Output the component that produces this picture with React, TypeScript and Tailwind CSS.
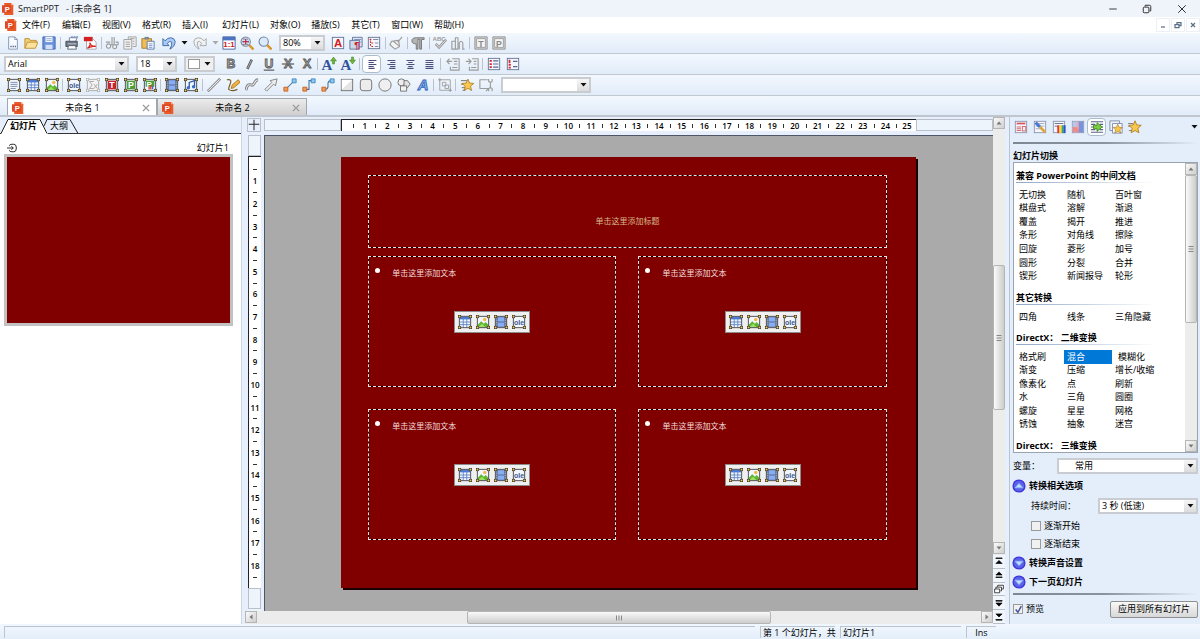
import type { ReactNode } from "react"
import clsx from "clsx"

type Kids = { children?: ReactNode }

const Svg = ({ children, className = "size-[14px]" }: Kids & { className?: string }) => (
	<svg viewBox="0 0 16 16" className={clsx("shrink-0", className)} fill="none" aria-hidden="true">{children}</svg>
)

const Letter = ({ children, fill, size = 10, x = 8, y = 12 }: { children: string, fill: string, size?: number, x?: number, y?: number }) => (
	<text x={x} y={y} fontSize={size} fontWeight="bold" fontFamily="Liberation Sans, sans-serif" textAnchor="middle" fill={fill}>{children}</text>
)

const Logo = () => (
	<Svg className="size-3">
		<path d="M3 0h9l3 3v13H3z" fill="#e95a2b" />
		<path d="M0 3h12v10H0z" fill="#e04a22" />
		<path d="M12 0v3h3z" fill="#f6a98c" />
		<Letter fill="#fff" size={10} x={7} y={12}>P</Letter>
	</Svg>
)

// selection frame with four yellow handles
const Frame = ({ children, className, gray }: Kids & { className?: string, gray?: boolean }) => (
	<Svg className={className}>
		<rect x="2" y="2" width="12" height="12" fill={gray ? "#f2f2f2" : "#f1f5fc"} />
		{children}
		<rect x="1.5" y="1.5" width="13" height="13" stroke={gray ? "#a5a5a5" : "#3c3f48"} />
		{[[0, 0], [12.5, 0], [0, 12.5], [12.5, 12.5]].map(([x, y]) => (
			<g key={`${x}-${y}`}>
				<rect x={x} y={y} width="3.5" height="3.5" fill={gray ? "#a8a8a8" : "#33302a"} />
				<rect x={x + 0.7} y={y + 0.7} width="2.1" height="2.1" fill={gray ? "#f4f4f4" : "#f0c858"} />
			</g>
		))}
	</Svg>
)

const TextFrame = () => <Frame><path d="M4 5h8M4 7.300h8M4 9.600h8M4 12h6" stroke="#7286a8" /></Frame>
const TableFrame = ({ className }: { className?: string }) => (
	<Frame className={className}>
		<path d="M2 2h12v3H2z" fill="#4a7ad2" />
		<path d="M2 8h12M2 11h12M6 4v10M10 4v10" stroke="#5c83c8" />
	</Frame>
)
const ImageFrame = ({ className }: { className?: string }) => (
	<Frame className={className}>
		<path d="M2 14V11l4-4 3 3 2-2 3 3v3z" fill="#5fb52f" />
		<path d="M2 14l5-4 4 4z" fill="#9be064" />
		<circle cx="10" cy="5" r="2" fill="#f5b84a" />
	</Frame>
)
const OleFrame = ({ className }: { className?: string }) => (
	<Frame className={className}><Letter fill="#3d5a8e" size={8} y={11}>ole</Letter></Frame>
)
const FilmFrame = ({ className }: { className?: string }) => (
	<Frame className={className}>
		<path d="M2 2h12v12H2z" fill="#5a6b8c" />
		<path d="M4.500 2.500h7v5h-7zM4.500 8.500h7v5h-7z" fill="#86adf5" />
		<path d="M3.200 4v9M12.800 4v9" stroke="#d6e0f4" strokeDasharray="1 1" />
	</Frame>
)
const LetterFrame = ({ letter, bg }: { letter: string, bg: string }) => (
	<Frame><path d="M3 3h10v10H3z" fill={bg} /><Letter fill="#fff" size={10} y={11.5}>{letter}</Letter></Frame>
)

const ABig = ({ up }: { up?: boolean }) => (
	<Svg className="size-4">
		<text x="6" y="14" fontSize="15" fontWeight="bold" fontFamily="Liberation Serif, serif" textAnchor="middle" fill="#31549d">A</text>
		<path d={up ? "M12.500 1l3 4h-2v3h-2V5h-2z" : "M12.500 8l3-4h-2V1h-2v3h-2z"} fill="#6db33a" stroke="#3f7d1c" strokeWidth=".5" />
	</Svg>
)

const Lines = ({ d }: { d: string }) => <Svg><path d={d} stroke="#4b4f7c" strokeWidth="1.3" /></Svg>

const Boxed = ({ children, stroke = "#5f6f92" }: Kids & { stroke?: string }) => (
	<Svg><rect x="1.5" y="1.5" width="13" height="13" fill="#f4f6fc" stroke={stroke} />{children}</Svg>
)

const Magnifier = ({ children }: Kids) => (
	<Svg>
		<path d="M10.500 10.500l4 4" stroke="#d99a2b" strokeWidth="3" strokeLinecap="round" />
		<circle cx="6.500" cy="6.500" r="5.300" fill="#dbe9fa" stroke="#72839f" strokeWidth="1.200" />
		{children}
	</Svg>
)

const Gray = ({ d, fill = "none", width = 1.3 }: { d: string, fill?: string, width?: number }) => (
	<Svg><path d={d} stroke="#9c9c9c" strokeWidth={width} fill={fill} strokeLinejoin="round" /></Svg>
)

const Connector = ({ d }: { d: string }) => (
	<Svg>
		<path d={d} stroke="#3f6fa5" strokeWidth="1.2" />
		<path d="M10.500 1h4.500v4.500h-4.500z" fill="#8cc8f0" stroke="#3d86bb" />
		<path d="M1 10.500h4.500V15H1z" fill="#f29a56" stroke="#c4601f" />
	</Svg>
)

const Star = ({ x = 8, y = 8, s = 1 }: { x?: number, y?: number, s?: number }) => (
	<path
		transform={`translate(${x} ${y}) scale(${s})`}
		d="M0-7.500L2.100-2.500 7.500-2 3.400 1.600 4.700 7 0 4.200-4.700 7-3.400 1.600-7.500-2-2.100-2.500z"
		fill="#f8c84e"
		stroke="#a87818"
	/>
)

const Btn = ({ label, children, active, className = "w-[18px]" }: Kids & { label: string, active?: boolean, className?: string }) => (
	<button
		type="button"
		aria-label={label}
		className={clsx("flex h-[18px] shrink-0 items-center justify-center", className, active && "rounded-sm border border-[#a9bccf] bg-white")}
	>
		{children}
	</button>
)

const Wide = (props: Kids & { label: string, active?: boolean }) => <Btn {...props} className="w-[19px]" />

const Sep = ({ className = "w-1" }: { className?: string }) => (
	<div className={clsx("flex h-3 shrink-0 justify-center", className)}><div className="w-px bg-[#bcc2ca]" /></div>
)

const Caret = ({ className = "w-[7px]", gray }: { className?: string, gray?: boolean }) => (
	<svg viewBox="0 0 7 4" className={clsx("h-1", className)} aria-hidden="true"><path d="M.5 0h6L3.500 3.500z" fill={gray ? "#a8a8a8" : "#111"} /></svg>
)

const Combo = ({ label, value, className, id, pad = "pl-0.5" }: { label: string, value: string, className: string, id?: string, pad?: string }) => (
	<div className={clsx("relative h-4 border-2 border-[#c9ccd1] bg-white", className)}>
		<select id={id} aria-label={id ? undefined : label} className={clsx("block h-3 w-full appearance-none bg-transparent pr-3 leading-3 outline-none", pad)}>
			<option>{value}</option>
		</select>
		<span className="pointer-events-none absolute inset-y-0 right-0 flex w-3 items-center justify-center bg-linear-to-b from-[#f6f6f6] to-[#dcdcdc]">
			<Caret />
		</span>
	</div>
)

const Toolbar = ({ children }: Kids) => (
	<div className="flex h-[21px] shrink-0 items-center border-b border-[#c2c8d0] bg-linear-to-b from-[#f3f8fe] to-[#e1ecf9] pl-1">{children}</div>
)

const TitleBar = () => (
	<header className="flex h-[17px] shrink-0 items-center bg-[#eff3fa] pl-0.5">
		<Logo />
		<h1 className="ml-1 whitespace-pre text-[#222]">SmartPPT   - [未命名 1]</h1>
		<div className="ml-auto flex">
			<button type="button" aria-label="最小化" className="flex h-4 w-[34px] items-center justify-center"><Svg className="size-2.5"><path d="M2 8h12" stroke="#333" strokeWidth="1.5" /></Svg></button>
			<button type="button" aria-label="还原" className="flex h-4 w-[34px] items-center justify-center">
				<Svg className="size-2.5"><path d="M5 4V2h7q2 0 2 2v7h-2" stroke="#333" strokeWidth="1.6" /><rect x="2" y="5" width="9" height="9" rx="1.500" stroke="#333" strokeWidth="1.600" /></Svg>
			</button>
			<button type="button" aria-label="关闭" className="flex h-4 w-[36px] items-center justify-center"><Svg className="size-2.5"><path d="M2 2l12 12M14 2L2 14" stroke="#333" strokeWidth="1.6" /></Svg></button>
		</div>
	</header>
)

const menus = ["文件(F)", "编辑(E)", "视图(V)", "格式(R)", "插入(I)", "幻灯片(L)", "对象(O)", "播放(S)", "其它(T)", "窗口(W)", "帮助(H)"]

const MenuBar = () => (
	<nav className="flex h-4 shrink-0 items-center bg-white pl-[5px]">
		<Logo />
		<div className="ml-[5px] flex gap-[11px]">
			{menus.map(m => <button key={m} type="button" className="min-w-[29px] whitespace-nowrap text-left">{m}</button>)}
		</div>
		<div className="ml-auto flex gap-px text-[#5c6f88]">
			{[["最小化", "M4 12h8"], ["还原", "M2 7h8v6H2zM6 6V3h8v6h-3"], ["关闭", "M4 4l8 8M12 4l-8 8"]].map(([label, d]) => (
				<button key={label} type="button" aria-label={label} className="flex size-[14px] items-center justify-center border border-[#edf0f4]">
					<Svg className="size-2"><path d={d} stroke="currentColor" strokeWidth="2.5" /></Svg>
				</button>
			))}
		</div>
	</nav>
)

const StandardBar = () => (
	<Toolbar>
		<Btn label="新建"><Svg><path d="M3 1h7l3 3v11H3z" fill="#f7faff" stroke="#7f90ae" /><path d="M10 1v3h3" stroke="#7f90ae" /><path d="M5 12h7" stroke="#55658a" strokeWidth="1.500" strokeDasharray="1.500 1" /></Svg></Btn>
		<Btn label="打开"><Svg><path d="M1 14V3h5l1 2h7v3" fill="#f4d074" stroke="#b98a2e" /><path d="M1 14l3-7h12l-3 7z" fill="#fce29a" stroke="#b98a2e" /></Svg></Btn>
		<Btn label="保存"><Svg><path d="M1 1h14v14H1z" fill="#6a92dc" stroke="#3f64ae" /><path d="M4 1h8v6H4z" fill="#f3f7ff" /><path d="M5 3h6M5 5h6" stroke="#95a9cf" /><path d="M4 10h8v5H4z" fill="#d3e0f7" /></Svg></Btn>
		<Sep className="w-[5px]" />
		<Btn label="打印"><Svg><path d="M5 6V2h9l-2 4" fill="#fff" stroke="#6b7a92" /><path d="M1 6h13v6H1z" fill="#6d7684" stroke="#454c58" /><path d="M3 9h10" stroke="#cbd3df" /><path d="M4 11h8l1 4H3z" fill="#fff" stroke="#555d6a" /><path d="M7 1h8" stroke="#3e62b0" strokeDasharray="2 1" /></Svg></Btn>
		<Btn label="导出PDF"><Svg><path d="M4 3h7l4 4v8H4z" fill="#fff" stroke="#a4a4a4" /><path d="M1 1h10v5H1z" fill="#d42020" /><path d="M5 14c3-2 4-6 3-6s1 4 6 4c1-1-5 0-9 2z" stroke="#d42020" strokeWidth="1.300" /></Svg></Btn>
		<Sep />
		<Btn label="剪切"><Gray d="M8 1v9M10.500 1v9M1 7h5M12 7h3v3H5.500M4 9a2.500 2.500 0 1 0 .1 0M11 10a2.300 2.300 0 1 0 .1 0" /></Btn>
		<Btn label="复制"><Gray d="M6 4V1h9v11h-4M1 4h9v11H1zM3 7h5M3 9.500h5M3 12h5M8 3h5M11 6h2M11 9h2" fill="#f0f0f0" width={1} /></Btn>
		<Btn label="粘贴"><Svg><path d="M1 3h11v11H1z" fill="#efbd56" stroke="#a87a20" /><path d="M4 1h5v3H4z" fill="#7c8798" /><path d="M7 6h8v9H7z" fill="#f4f8ff" stroke="#5571a7" /><path d="M9 9h4M9 11h4M9 13h4" stroke="#7693c5" /></Svg></Btn>
		<Btn label="撤消" className="w-6"><Svg><path d="M1 3v8h7L6 8.500q3-4 5-1.500 1 3-2 8 6-3 6-9-1-4-5-4-4 0-6.500 3.500z" fill="#a9caf4" stroke="#355f9f" strokeLinejoin="round" /></Svg></Btn>
		<Caret />
		<Btn label="重做" className="w-6"><Svg><path d="M15 3v8H8l2-2.500Q7 4.500 5 7q-1 3 2 8-6-3-6-9 1-4 5-4 4 0 6.500 3.500z" fill="#f2f2f2" stroke="#a2a2a2" strokeLinejoin="round" /></Svg></Btn>
		<Caret gray />
		<div className="flex pl-px">
			<Btn label="实际大小"><Svg><path d="M1 1h14v14H1z" fill="#fff" stroke="#3d5a9a" /><path d="M1 1h14v4H1z" fill="#4b73bf" /><Letter fill="#d01818" size={9} y={13}>1:1</Letter></Svg></Btn>
			<Btn label="缩放选区"><Magnifier><path d="M6.500 3v7M3 6.500h7" stroke="#c02f45" strokeWidth="1.500" /><path d="M3.500 3.500h6v6h-6z" stroke="#54607a" strokeDasharray="2 2" /></Magnifier></Btn>
			<Btn label="缩放"><Magnifier /></Btn>
		</div>
		<Combo label="显示比例" value="80%" className="ml-[5px] mr-1 w-[46px]" />
		<Btn label="字符"><Boxed><Letter fill="#d21c1c" size={13} y={12.5}>A</Letter></Boxed></Btn>
		<Btn label="段落"><Svg><path d="M4 1.500h11v11H4z" fill="#dde5f5" stroke="#5d6f96" /><path d="M6 4h8M6 7h8" stroke="#7b8bb0" /><path d="M1 5h11v10H1z" fill="#cdd7ec" stroke="#5d6f96" /><Letter fill="#d21c1c" size={11} x={9} y={14}>¶</Letter></Svg></Btn>
		<Btn label="大纲"><Boxed><path d="M7 4h6M9 8h4M9 12h4" stroke="#6b7ca5" /><path d="M3 4h3M5 8h3M5 12h3M4 3v9" stroke="#d22a2a" strokeWidth="1.300" strokeDasharray="2 1" /></Boxed></Btn>
		<Sep />
		<Btn label="格式刷"><Gray d="M15 1l-5 6M3 6l8-1 1 7-5 3-6-5zM5 6l6 5" fill="#f3f3f3" /></Btn>
		<Sep />
		<Btn label="段落标记"><Svg><path d="M15 2H6Q1 2 1 5.500T6 9v6h2V4h2v11h2V4h3z" fill="#b5b5b5" stroke="#6f6f6f" /></Svg></Btn>
		<Sep />
		<Btn label="拼写检查"><Svg><Letter fill="#999" size={7} x={7} y={6}>ABC</Letter><path d="M3 9l4 4 8-9" stroke="#979797" strokeWidth="3" /><path d="M3 9l4 4 8-9" stroke="#e9e9e9" /></Svg></Btn>
		<Btn label="同义词"><Gray d="M1 6h4v9H1zM5 2h3v13H5zM9.500 15V8q2-4 4 0v7h2" /></Btn>
		<Sep className="w-[5px]" />
		<Btn label="标题母版"><Svg><path d="M1 1h14v14H1z" fill="#d4d4d4" stroke="#8b8b8b" /><path d="M3 3h10v10H3z" fill="#f5f5f5" stroke="#9a9a9a" /><Letter fill="#888">T</Letter></Svg></Btn>
		<Btn label="幻灯片母版"><Svg><path d="M1 1h14v14H1z" fill="#d4d4d4" stroke="#8b8b8b" /><path d="M3 3h10v10H3z" fill="#f5f5f5" stroke="#9a9a9a" /><Letter fill="#888">P</Letter></Svg></Btn>
	</Toolbar>
)

const GrayLetter = ({ children, line }: { children: string, line?: string }) => (
	<Svg>
		<text x="8" y="13" fontSize="14" fontWeight="bold" fontFamily="Liberation Sans, sans-serif" textAnchor="middle" fill="#b0b0b0" stroke="#5d5d5d">{children}</text>
		{line && <path d={line} stroke="#666" strokeWidth="1.500" />}
	</Svg>
)

const FormatBar = () => (
	<Toolbar>
		<Combo label="字体" value="Arial" className="w-[125px]" />
		<Combo label="字号" value="18" className="ml-[7px] w-[41px]" />
		<div className="ml-[7px] mr-[6px] flex h-4 w-[31px] items-center border-2 border-[#c9ccd1] bg-[#efefef]">
			<button type="button" aria-label="填充颜色" className="flex w-full items-center justify-between px-0.5"><span className="h-2.5 w-3 border border-[#9a9a9a] bg-white" /><Caret /></button>
		</div>
		<Wide label="粗体"><GrayLetter>B</GrayLetter></Wide>
		<Wide label="斜体"><Svg><path d="M10 3L5 13.500" stroke="#5d5d5d" strokeWidth="3" /><path d="M9.700 3.700L5.300 12.800" stroke="#b8b8b8" /></Svg></Wide>
		<Wide label="下划线"><GrayLetter line="M2 15h12">U</GrayLetter></Wide>
		<Wide label="删除线"><GrayLetter line="M1 8h14">X</GrayLetter></Wide>
		<Wide label="阴影"><GrayLetter>X</GrayLetter></Wide>
		<Sep className="w-[3px]" />
		<Wide label="增大字号"><ABig up /></Wide>
		<Wide label="减小字号"><ABig /></Wide>
		<Sep className="w-[5px]" />
		<Wide label="左对齐" active><Lines d="M4 4h9M4 6.300h6M4 8.600h9M4 10.900h6M4 13h7" /></Wide>
		<Wide label="右对齐"><Lines d="M4 4h9M7 6.300h6M4 8.600h9M7 10.900h6M6 13h7" /></Wide>
		<Wide label="居中"><Lines d="M4 4h9M6 6.300h5M4 8.600h9M6 10.900h5M5 13h7" /></Wide>
		<Wide label="两端对齐"><Lines d="M4 4h9M4 6.300h9M4 8.600h9M4 10.900h9M4 13h9" /></Wide>
		<Sep className="w-[5px]" />
		<Wide label="减少缩进"><Gray d="M7 2h8v13H5v-4M9 5h4M9 8h4M7 12h6M1 5h6M4 2L1 5l3 3" /></Wide>
		<Wide label="增加缩进"><Gray d="M8 2h7v13H5v-4M10 5h3M10 8h3M7 12h6M1 5h6M4 2l3 3-3 3" /></Wide>
		<Sep className="w-[3px]" />
		<Wide label="项目符号"><Boxed><path d="M3 4.500h2.500M3 8h2.500M3 11.500h2.500" stroke="#d22a2a" strokeWidth="2" /><path d="M7 4.500h6M7 8h6M7 11.500h6" stroke="#59689a" strokeWidth="1.300" /></Boxed></Wide>
		<Wide label="编号"><Boxed><path d="M4 3v4M3 9h2.500M3 12h2.500" stroke="#d22a2a" strokeWidth="2" /><path d="M8 5h5M8 11h5" stroke="#59689a" strokeWidth="1.300" /></Boxed></Wide>
	</Toolbar>
)

const ObjectBar = () => (
	<Toolbar>
		<Wide label="文本框"><TextFrame /></Wide>
		<Wide label="表格"><TableFrame /></Wide>
		<Wide label="图片"><ImageFrame /></Wide>
		<Sep className="w-[3px]" />
		<Wide label="OLE 对象"><OleFrame /></Wide>
		<Wide label="公式"><Frame gray><path d="M9 4H4l3 4-3 4h5M9 7l4 5M13 7l-4 5" stroke="#a2a2a2" /></Frame></Wide>
		<Wide label="TextMaker 对象"><LetterFrame letter="T" bg="#c1272d" /></Wide>
		<Wide label="PlanMaker 对象"><LetterFrame letter="P" bg="#4f9d3a" /></Wide>
		<Wide label="图表"><Frame><path d="M3 3h10v7H3z" fill="#4f9d3a" /><Letter fill="#fff" size={9} x={7} y={10}>P</Letter><path d="M7 13v-3M9 13V8" stroke="#d3362e" strokeWidth="1.500" /><path d="M11 13V9" stroke="#4068c8" strokeWidth="1.500" /></Frame></Wide>
		<Sep className="w-[3px]" />
		<Wide label="影片"><FilmFrame /></Wide>
		<Wide label="声音"><Frame><path d="M6 11V5l6-2v7" stroke="#2c5cab" strokeWidth="1.500" /><circle cx="5" cy="11" r="2" fill="#3a6fc4" /><circle cx="11" cy="10" r="2" fill="#3a6fc4" /></Frame></Wide>
		<Sep className="w-[4px]" />
		<Wide label="直线"><Svg><path d="M1 15L15 1" stroke="#747474" strokeWidth="3" /><path d="M1.500 14.500l13-13" stroke="#f1f1f1" strokeWidth="1.200" /></Svg></Wide>
		<Wide label="自由曲线"><Svg><path d="M1 2q6-1 4 4T3 13q4 3 10 0" stroke="#7a5a22" strokeWidth="1.300" /><path d="M6 12l1-4 7-6 2 3-7 6z" fill="#f1b544" stroke="#a97519" /></Svg></Wide>
		<Wide label="曲线"><Svg><path d="M1 14C3 4 7 9 9 8s2-6 6-6" stroke="#777" strokeWidth="3.200" /><path d="M1 14C3 4 7 9 9 8s2-6 6-6" stroke="#efefef" strokeWidth="1.200" /></Svg></Wide>
		<Wide label="箭头"><Svg><path d="M1 13l8-8-2-2 8-2-2 8-2-2-8 8z" fill="#eee" stroke="#7a7a7a" /></Svg></Wide>
		<Wide label="直线连接符"><Connector d="M4 12l8-8" /></Wide>
		<Wide label="折线连接符"><Connector d="M4 13h4V3h4" /></Wide>
		<Wide label="曲线连接符"><Connector d="M5 13C12 12 4 4 11 3" /></Wide>
		<Wide label="矩形"><Svg><rect x="1.500" y="1.500" width="13" height="13" fill="#e4e4e4" stroke="#6c6c6c" /><path d="M2 2h12L2 13z" fill="#fff" /></Svg></Wide>
		<Wide label="圆角矩形"><Svg><rect x="1.500" y="1.500" width="13" height="13" rx="3" fill="#ececec" stroke="#6c6c6c" /></Svg></Wide>
		<Wide label="椭圆"><Svg><circle cx="8" cy="8" r="7" fill="#efefef" stroke="#6c6c6c" /></Svg></Wide>
		<Wide label="自选图形"><Svg><circle cx="5" cy="5" r="4" fill="#eee" stroke="#6c6c6c" /><path d="M8 3h4l3 4-3 4H8z" fill="#e2e2e2" stroke="#6c6c6c" /><path d="M4 9h7v6H4z" fill="#f2f2f2" stroke="#6c6c6c" /></Svg></Wide>
		<Wide label="艺术字"><Svg><text x="8" y="14" fontSize="17" fontStyle="italic" fontWeight="bold" fontFamily="Liberation Sans, sans-serif" textAnchor="middle" fill="#8fbcf2" stroke="#2f62b5">A</text></Svg></Wide>
		<Sep className="w-[3px]" />
		<Wide label="组合"><Gray d="M2 2h12v12H2zM5 5h4v4H5zM8 8h4v4H8zM0 2h4M2 0v4M12 14h4M14 12v4" width={1} /></Wide>
		<Sep className="w-[3px]" />
		<Wide label="动画"><Svg><path d="M1 3h7M1 7h4M2 11h4M3 14h3" stroke="#666" /><Star x={9} s={0.9} /></Svg></Wide>
		<Wide label="动作按钮"><Gray d="M11 12H1V2h9M8 15l3-3M11 1v3l2 1 2-1V1M13 5v6M11 15v-3l2-1 2 1v3" /></Wide>
		<Combo label="对象" value="" className="ml-[6px] w-[90px]" />
	</Toolbar>
)

const DocTab = ({ name, active }: { name: string, active?: boolean }) => (
	<div className={clsx("flex h-[17px] w-[150px] items-center border border-b-0 border-[#a0a7b0] pl-1 pr-[5px] pt-px", active ? "bg-white" : "bg-linear-to-b from-[#ececec] to-[#cfcfcf]")}>
		<Logo />
		<button type="button" role="tab" aria-selected={!!active} className="flex-1 text-center">{name}</button>
		<button type="button" aria-label="关闭"><Svg className="size-2.5"><path d="M3 3l10 10M13 3L3 13" stroke="#9a9a9a" strokeWidth="2.200" /></Svg></button>
	</div>
)

const LeftPanel = () => (
	<aside className="flex w-[242px] shrink-0 flex-col border-r border-[#cdd5df] bg-white">
		<div className="relative flex h-[17px] shrink-0 items-center border-b border-[#333] bg-[#e6effb] pt-0.5" role="tablist">
			<svg viewBox="0 0 80 17" className="absolute left-0 top-0 h-[17px] w-20" fill="none" aria-hidden="true">
				<path d="M1 17L8 2h32l8 15" fill="#fff" />
				<path d="M1 16.500L8 2.500h32l7 14M44 9l3-6.500h23l8 14" stroke="#222" />
			</svg>
			<button type="button" role="tab" aria-selected="true" className="relative ml-[10px] font-bold">幻灯片</button>
			<button type="button" role="tab" aria-selected="false" className="relative ml-[13px]">大纲</button>
		</div>
		<div className="flex items-center justify-between pl-[7px] pr-3 pt-2 leading-3">
			<Svg className="size-2.5"><path d="M4 5V4q0-2 4-2h3q4 0 4 6t-4 6H8q-4 0-4-2v-1M0 8h10M7 5l3 3-3 3" stroke="#222" strokeWidth="1.500" /></Svg>
			<span>幻灯片1</span>
		</div>
		<button type="button" aria-label="幻灯片 1 缩略图" className="ml-1 mr-2 aspect-[4/3] border-[3px] border-[#c2c2c2] bg-[#800000]" />
	</aside>
)

const ArrowGlyph = ({ d }: { d: string }) => <Svg className="size-2.5"><path d={d} fill="currentColor" stroke="currentColor" /></Svg>

const ScrollBtn = ({ label, d }: { label: string, d: string }) => (
	<button type="button" aria-label={label} className="flex size-3 shrink-0 items-center justify-center border border-[#b5b5b5] bg-linear-to-br from-[#fafafa] to-[#cfcfcf] text-[#777]">
		<Svg className="size-2"><path d={d} fill="currentColor" /></Svg>
	</button>
)

const UP = "M8 5l5 6H3z"
const DOWN = "M8 11l5-6H3z"

const HRuler = () => (
	<div className="flex h-3 bg-[#eef4fc]">
		<div className="w-[10.5%] border border-[#b9c0c9]" />
		<div className="flex w-[79%] overflow-hidden border-l border-t border-[#222] bg-white text-[8px] font-semibold leading-none">
			<div className="flex-[5]" />
			{Array.from({ length: 25 }, (_, i) => (
				<div key={i} className={clsx("flex min-w-0 items-center", i === 24 ? "flex-[9]" : "flex-[10]")}>
					<span className="h-1 w-px bg-[#333]" />
					<span className="flex-1 text-center">{i + 1}</span>
				</div>
			))}
		</div>
		<div className="flex-1 border border-[#b9c0c9]" />
	</div>
)

const VRuler = () => (
	<div className="flex w-[13px] flex-col bg-[#eef4fc] pb-0.5">
		<div className="flex-1 border border-[#b9c0c9]" />
		<div className="flex h-[432px] flex-col border-l border-t border-[#222] bg-white text-[8px] font-semibold leading-none">
			<div className="flex-[11]" />
			{Array.from({ length: 18 }, (_, i) => (
				<div key={i} className="flex min-h-0 flex-[20] flex-col items-center">
					<span className="h-px w-1 bg-[#333]" />
					<span className="flex flex-1 items-center">{i + 1}</span>
				</div>
			))}
			<div className="flex flex-[10] justify-center"><span className="h-px w-1 bg-[#333]" /></div>
		</div>
		<div className="flex-1 border border-[#b9c0c9]" />
	</div>
)

const Placeholder = ({ children, className }: Kids & { className?: string }) => (
	<div className={clsx("flex bg-black", className)}>
		<div className="flex flex-1 flex-col border border-dashed border-[#f0e0e0] bg-[#800000] bg-clip-padding">{children}</div>
	</div>
)

const ContentBox = () => (
	<Placeholder>
		<div className="flex gap-3 pl-1.5 pt-[10px]">
			<span className="mt-px size-[5px] rounded-full bg-white" />
			<span className="text-[8px] leading-3 text-[#f0dede]">单击这里添加文本</span>
		</div>
		<div className="mx-auto mt-8 flex h-[22px] w-[76px] items-center justify-around border border-[#8c8c8c] bg-[#f0f0f0] px-px">
			<button type="button" aria-label="插入表格"><TableFrame /></button>
			<button type="button" aria-label="插入图片"><ImageFrame /></button>
			<button type="button" aria-label="插入影片"><FilmFrame /></button>
			<button type="button" aria-label="插入 OLE 对象"><OleFrame /></button>
		</div>
	</Placeholder>
)

const Editor = () => (
	<main className="ml-[3px] flex min-w-0 flex-1 flex-col">
		<div className="flex h-[18px] shrink-0 items-center gap-[3px] pb-0.5 pl-0.5">
			<button type="button" aria-label="标尺原点" className="size-[14px] border border-[#b9c0c9]"><Svg className="size-3"><path d="M8 1v14M1 7h14" stroke="#222" strokeWidth="1.300" /></Svg></button>
			<div className="min-w-0 flex-1"><HRuler /></div>
		</div>
		<div className="flex min-h-0 flex-1">
			<div className="flex w-[19px] shrink-0 justify-center"><VRuler /></div>
			<div className="flex min-w-0 flex-1 items-center justify-center border-l border-t border-[#4d5767] bg-[#aaaaaa] pb-0.5 pr-px">
				<div className="flex aspect-[4/3] w-[79%] flex-col gap-2 bg-[#800000] pb-12 pl-[27px] pr-[29px] pt-[18px] shadow-[2px_2px_0_#1a0000]">
					<Placeholder className="h-[73px] text-center">
						<span className="my-auto pt-[18px] text-[8px] leading-3 text-[#d8b98a]">单击这里添加标题</span>
					</Placeholder>
					<div className="grid flex-1 grid-cols-2 grid-rows-2 gap-[22px]">
						<ContentBox />
						<ContentBox />
						<ContentBox />
						<ContentBox />
					</div>
				</div>
			</div>
		</div>
		<div className="flex h-[13px] shrink-0 bg-[#ececec]">
			<ScrollBtn label="向左滚动" d="M5 8l6-5v10z" />
			<div className="flex flex-1">
				<div className="w-[29%]" />
				<div className="flex w-[42%] items-center justify-center rounded-xs border border-[#b5b5b5] bg-linear-to-b from-[#fafafa] to-[#cdcdcd] text-[#888]"><Svg className="size-2"><path d="M3 3v10M8 3v10M13 3v10" stroke="currentColor" strokeWidth="2" /></Svg></div>
			</div>
			<ScrollBtn label="向右滚动" d="M11 8L5 3v10z" />
		</div>
	</main>
)

const navGlyphs = [
	["第一张", "M3 3h10v1H3zM8 7l5 5H3z"],
	["上一张", "M8 3l5 5H3zM3 11h10v1H3z"],
	["导航", ""],
	["下一张", "M3 4h10v1H3zM8 13l5-5H3z"],
	["最后一张", "M8 8l5-5H3zM3 12h10v1H3z"],
]

const VScroll = () => (
	<div className="flex w-3 shrink-0 flex-col bg-[#ececec]">
		<ScrollBtn label="向上滚动" d={UP} />
		<div className="flex flex-1 flex-col">
			<div className="h-[33%]" />
			<div className="flex h-[35%] items-center justify-center rounded-xs border border-[#b5b5b5] bg-linear-to-r from-[#fafafa] to-[#cdcdcd] text-[#888]"><Svg className="size-2"><path d="M3 3h10M3 8h10M3 13h10" stroke="currentColor" strokeWidth="2" /></Svg></div>
		</div>
		<ScrollBtn label="向下滚动" d={DOWN} />
		<div className="mt-px grid h-[69px] auto-rows-fr">
			{navGlyphs.map(([label, d]) => (
				<button key={label} type="button" aria-label={label} className="flex items-center justify-center border-b border-[#b9bfc8] bg-[#f1f6fd] text-black">
					{d ? <ArrowGlyph d={d} /> : <Svg className="size-2.5"><path d="M6 5V2h9v6h-3M3 8V5h9v6h-2M1 8h8v6H1z" fill="#fff" stroke="#222" strokeWidth="1.300" /></Svg>}
				</button>
			))}
		</div>
	</div>
)

const sections: { title: string, rows: string[][], height: string }[] = [
	{
		title: "兼容 PowerPoint 的中间文档",
		height: "h-[95px]",
		rows: [
			["无切换", "随机", "百叶窗"],
			["棋盘式", "溶解", "渐退"],
			["覆盖", "揭开", "推进"],
			["条形", "对角线", "擦除"],
			["回旋", "菱形", "加号"],
			["圆形", "分裂", "合并"],
			["锲形", "新闻报导", "轮形"],
		],
	},
	{ title: "其它转换", height: "h-[13px]", rows: [["四角", "线条", "三角隐藏"]] },
	{
		title: "DirectX： 二维变换",
		height: "h-[81px]",
		rows: [
			["格式刷", "混合", "模糊化"],
			["渐变", "压缩", "增长/收缩"],
			["像素化", "点", "刷新"],
			["水", "三角", "圆圈"],
			["螺旋", "星星", "网格"],
			["锈蚀", "抽象", "迷宫"],
		],
	},
	{ title: "DirectX： 三维变换", height: "h-0", rows: [] },
]

const TransitionList = () => (
	<div className="flex h-[291px] shrink-0 border border-[#9aa3b0] bg-white">
		<div className="flex flex-1 flex-col gap-[9px] overflow-hidden pl-0.5 pt-[7px]">
			{sections.map(s => (
				<section key={s.title} className="shrink-0">
					<h3 className="font-bold leading-3">{s.title}</h3>
					<div className="mb-[5px] h-px w-[140px] bg-linear-to-r from-[#8fa6c8] to-white" />
					<div className={clsx("grid auto-rows-fr", s.height)}>
						{s.rows.map(row => (
							<div key={row[0]} className="grid min-h-0 grid-cols-[48px_48px_auto]">
								{row.map(name => (
									<button
										key={name}
										type="button"
										className={clsx("flex items-center whitespace-nowrap pl-[3px] leading-3", name === "混合" && "bg-[#0078d7] text-white", name === "模糊化" && "ml-[3px]")}
									>
										{name}
									</button>
								))}
							</div>
						))}
					</div>
				</section>
			))}
		</div>
		<div className="flex w-3 flex-col bg-[#ececec]">
			<ScrollBtn label="向上滚动" d={UP} />
			<div className="flex-1">
				<div className="flex h-[56%] items-center justify-center rounded-xs border border-[#b5b5b5] bg-linear-to-r from-[#fafafa] to-[#cdcdcd] text-[#888]"><Svg className="size-2"><path d="M3 3h10M3 8h10M3 13h10" stroke="currentColor" strokeWidth="2" /></Svg></div>
			</div>
			<ScrollBtn label="向下滚动" d={DOWN} />
		</div>
	</div>
)

const Fold = ({ title, open }: { title: string, open?: boolean }) => (
	<button type="button" aria-expanded={!!open} className="flex h-[19px] items-center gap-[3px] font-bold">
		<Svg className="-ml-px size-[14px]">
			<circle cx="8" cy="8" r="7.500" fill="#3f35d8" />
			<circle cx="8" cy="8" r="6" fill="#5a63e8" />
			<path d={open ? "M8 5l4.500 5h-9z" : "M8 11l4.500-5h-9z"} fill="#c4dcff" stroke="#8fb5f8" />
		</Svg>
		{title}
	</button>
)

const Check = ({ label, checked }: { label: string, checked?: boolean }) => (
	<label className="flex h-[18px] items-center gap-[3px]">
		<input type="checkbox" defaultChecked={checked} className="size-[10px] appearance-none border border-[#9a9a9a] bg-[#f1f1f1]" />
		{checked && <Svg className="-ml-3 size-[9px]"><path d="M3 8l4 5 6-11" stroke="#3d4f9c" strokeWidth="2.500" /></Svg>}
		<span>{label}</span>
	</label>
)

const Rule = () => <div className="h-0.5 shrink-0 bg-linear-to-r from-[#7f8793] via-[#8b93a0] to-[#e4eefb]" />

const RightPanel = () => (
	<aside className="ml-1 flex w-[191px] shrink-0 flex-col border-l border-[#b9c3d1] bg-[#e4eefb] pl-[3px] pr-[2px]">
		<div className="-ml-0.5 flex h-[25px] shrink-0 items-center pb-[5px]">
			<Wide label="版式"><Boxed stroke="#8790a8"><path d="M3 4h10" stroke="#d4585c" strokeWidth="2" /><path d="M3 8h5M3 10h5M3 12h5" stroke="#d4585c" /><rect x="9.500" y="7.500" width="4" height="5" stroke="#d4585c" /></Boxed></Wide>
			<Wide label="设计"><Boxed stroke="#8790a8"><path d="M3 4h10M3 7h10M3 10h6" stroke="#9aa5c4" /><path d="M3 3l5 5" stroke="#4a76d0" strokeWidth="3.500" /><path d="M8 8l6 6" stroke="#e0a63a" strokeWidth="3" /></Boxed></Wide>
			<Wide label="配色方案"><Boxed stroke="#8790a8"><path d="M3 4h10M3 7h4" stroke="#5c688c" /><path d="M6 6h2.500v9H6z" fill="#e33" /><path d="M8.500 6h2.500v9H8.500z" fill="#f3df2c" /><path d="M11 6h2v9h-2z" fill="#2faf4c" /><path d="M13 6h2.500v9H13z" fill="#2d4fdc" /></Boxed></Wide>
			<Wide label="背景"><Boxed stroke="#8790a8"><path d="M2 2h6v12H2z" fill="#b9c6ea" /><path d="M8 2h6v12H8z" fill="#7693dd" /><path d="M2 8h7v6H2z" fill="#f08a8a" /><path d="M7 2h2v8H7z" fill="#f0a0a8" /></Boxed></Wide>
			<Wide label="幻灯片切换" active><Svg><path d="M1 2h14M1 5h5M1 8h3M1 11h5M1 14h14M11 5h4M13 8h2M11 11h4" stroke="#59648a" strokeWidth="1.300" /><path d="M4 6h4V3l6 5-6 5v-3H4z" fill="#7ccc3f" stroke="#3c8a1c" /></Svg></Wide>
			<Wide label="动画方案"><Svg><path d="M1 1h11v11H1z" fill="#eef2fa" stroke="#7c88a6" /><path d="M4 4h11v11H4z" fill="#f8f9fd" stroke="#7c88a6" /><Star x={10} y={10} s={0.7} /></Svg></Wide>
			<Wide label="对象动画"><Svg><path d="M0 4h6M0 7h3M1 12h4" stroke="#777" /><Star s={0.95} /></Svg></Wide>
			<button type="button" aria-label="更多" className="ml-auto"><Caret /></button>
		</div>
		<Rule />
		<h2 className="shrink-0 pt-1.5 font-bold leading-3">幻灯片切换</h2>
		<TransitionList />
		<div className="mt-[5px] flex h-4 items-center">
			<label htmlFor="variant" className="w-11">变量：</label>
			<Combo id="variant" label="变量" value="常用" className="flex-1" pad="pl-4" />
		</div>
		<div className="mt-0.5 flex"><Fold title="转换相关选项" open /></div>
		<div className="mt-[3px] flex h-4 items-center pl-[18px]">
			<label htmlFor="duration" className="w-[67px]">持续时间：</label>
			<Combo id="duration" label="持续时间" value="3 秒 (低速)" className="flex-1" />
		</div>
		<div className="mt-[3px] flex flex-col pl-[18px]">
			<Check label="逐渐开始" />
			<Check label="逐渐结束" />
		</div>
		<div className="flex flex-col">
			<Fold title="转换声音设置" />
			<Fold title="下一页幻灯片" />
		</div>
		<div className="mb-1.5 mt-auto shrink-0">
			<Rule />
			<div className="mt-[5px] flex items-center justify-between">
				<Check label="预览" checked />
				<button type="button" className="h-[17px] rounded-xs border border-[#8f8f8f] bg-linear-to-b from-[#f8f8f8] to-[#d8d8d8] px-[7px]">应用到所有幻灯片</button>
			</div>
		</div>
	</aside>
)

const StatusCell = ({ children, className }: Kids & { className: string }) => (
	<div className={clsx("h-3 whitespace-nowrap border-l border-t border-[#bcc4cf] pl-0.5 leading-3", className)}>{children}</div>
)

const StatusBar = () => (
	<footer className="flex h-[15px] shrink-0 items-center gap-[5px] bg-linear-to-b from-[#f1f7fe] to-[#e3eefa] pl-1">
		<StatusCell className="flex-1" />
		<StatusCell className="w-[75px]">第 1 个幻灯片，共</StatusCell>
		<StatusCell className="w-[121px]">幻灯片1</StatusCell>
		<StatusCell className="mr-[204px] w-[30px] pr-0.5 text-center">Ins</StatusCell>
	</footer>
)

const App = () => {
	return (
		<div className="flex h-screen w-full flex-col overflow-hidden bg-[#e6effb] font-['Open_Sans','Noto_Sans_CJK_SC',sans-serif] text-[9px] leading-3 text-black">
			<TitleBar />
			<MenuBar />
			<StandardBar />
			<FormatBar />
			<ObjectBar />
			<div className="flex h-[21px] shrink-0 items-end border-b-2 border-[#bfc6d0] bg-linear-to-b from-[#f3f8fe] to-[#e1ecf9] pl-[7px]" role="tablist">
				<DocTab name="未命名 1" active />
				<DocTab name="未命名 2" />
			</div>
			<div className="flex min-h-0 flex-1">
				<LeftPanel />
				<Editor />
				<VScroll />
				<RightPanel />
			</div>
			<StatusBar />
		</div>
	)
}

export default App
